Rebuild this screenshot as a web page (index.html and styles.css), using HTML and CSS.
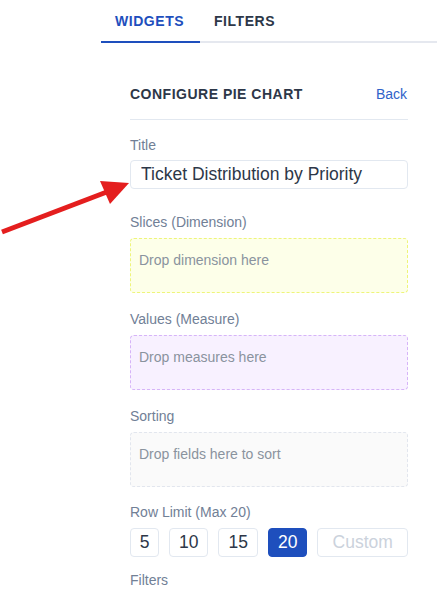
FILE: index.html
```html
<!DOCTYPE html>
<html lang="en">
<head>
<meta charset="utf-8">
<title>Configure Pie Chart</title>
<link rel="stylesheet" href="styles.css">
</head>
<body>
<div class="page">
  <aside class="sidebar">
    <nav class="tabs">
      <div class="tab active">WIDGETS</div>
      <div class="tab">FILTERS</div>
    </nav>
    <div class="panel">
      <div class="panel-header">
        <h2 class="panel-title">CONFIGURE PIE CHART</h2>
        <a class="back-link" href="#">Back</a>
      </div>
      <div class="field field-title">
        <label class="field-label">Title</label>
        <input class="text-input" type="text" value="Ticket Distribution by Priority">
      </div>
      <div class="field">
        <div class="field-label">Slices (Dimension)</div>
        <div class="drop-zone zone-dimension">Drop dimension here</div>
      </div>
      <div class="field">
        <div class="field-label">Values (Measure)</div>
        <div class="drop-zone zone-measure">Drop measures here</div>
      </div>
      <div class="field">
        <div class="field-label">Sorting</div>
        <div class="drop-zone zone-sort">Drop fields here to sort</div>
      </div>
      <div class="field field-limit">
        <div class="field-label">Row Limit (Max 20)</div>
        <div class="limit-row">
          <button class="limit-btn">5</button>
          <button class="limit-btn">10</button>
          <button class="limit-btn">15</button>
          <button class="limit-btn selected">20</button>
          <input class="limit-custom" type="text" placeholder="Custom">
        </div>
      </div>
      <div class="field field-filters">
        <div class="field-label">Filters</div>
      </div>
    </div>
  </aside>
  <svg class="pointer-arrow" width="140" height="60" viewBox="0 0 140 60" aria-hidden="true">
    <line x1="2" y1="53" x2="112" y2="11" stroke="#e41e1e" stroke-width="5" stroke-linecap="butt"/>
    <polygon points="129,4 100,2 110,25" fill="#e41e1e"/>
  </svg>
</div>
</body>
</html>
```

FILE: styles.css
```css
* {
  box-sizing: border-box;
}

html, body {
  margin: 0;
  padding: 0;
  background: #ffffff;
}

body {
  font-family: "Liberation Sans", Arial, sans-serif;
  color: #2d3748;
  overflow: hidden;
}

.page {
  position: relative;
  width: 437px;
  height: 597px;
  padding-left: 101px;
}

.sidebar {
  width: 336px;
}

.tabs {
  display: flex;
  border-bottom: 2px solid #e5e8ef;
}

.tab {
  width: 99px;
  padding: 13px 0 12px 14px;
  font-size: 14px;
  line-height: 16px;
  font-weight: bold;
  letter-spacing: 0.55px;
  color: #2d3748;
  margin-bottom: -2px;
  border-bottom: 2px solid transparent;
}

.tab.active {
  color: #1e4fbd;
  border-bottom-color: #1e4fbd;
}

.panel {
  padding: 0 29px;
}

.panel-header {
  display: flex;
  justify-content: space-between;
  align-items: center;
  padding: 42px 0 16px;
  border-bottom: 1px solid #e2e8f0;
}

.panel-title {
  margin: 0;
  font-size: 14px;
  line-height: 18px;
  font-weight: bold;
  letter-spacing: 0.5px;
  color: #2d3748;
}

.back-link {
  font-size: 14px;
  line-height: 18px;
  color: #2f62c9;
  text-decoration: none;
  margin-right: 1px;
}

.field {
  margin-top: 16px;
}

.field-title {
  margin-top: 15px;
  margin-bottom: 23px;
}

.field-label {
  display: block;
  font-size: 14px;
  line-height: 20px;
  color: #718096;
  margin-bottom: 6px;
}

.field-title .field-label {
  margin-bottom: 5px;
}

.text-input {
  display: block;
  width: 100%;
  height: 29px;
  border: 1px solid #e2e8f0;
  border-radius: 4px;
  padding: 0 10px;
  font-family: "Liberation Sans", Arial, sans-serif;
  font-size: 17.5px;
  color: #2d3748;
  outline: none;
}

.field-title + .field {
  margin-top: 0;
}

.drop-zone {
  height: 55px;
  border: 1px dashed;
  border-radius: 4px;
  padding: 11px 8px;
  font-size: 14px;
  line-height: 20px;
  color: #8a939e;
}

.zone-dimension {
  background: #fdffe9;
  border-color: #eef57a;
}

.zone-measure {
  background: #f8f1ff;
  border-color: #d6b4f8;
}

.zone-sort {
  background: #fafafa;
  border-color: #e2e6ee;
}

.field-limit {
  margin-top: 15px;
}

.field-filters {
  margin-top: 13px;
}

.limit-row {
  display: flex;
  gap: 10px;
}

.limit-btn {
  height: 29px;
  min-width: 29px;
  padding: 0 9px;
  border: 1px solid #e2e8f0;
  border-radius: 4px;
  background: #ffffff;
  font-family: "Liberation Sans", Arial, sans-serif;
  font-size: 17.5px;
  color: #2d3748;
}

.limit-btn:first-child {
  width: 29px;
  padding: 0;
}

.limit-btn.selected {
  background: #1e4fbd;
  border-color: #1e4fbd;
  color: #ffffff;
}

.limit-custom {
  flex: 1;
  height: 29px;
  min-width: 0;
  border: 1px solid #e2e8f0;
  border-radius: 4px;
  text-align: center;
  font-family: "Liberation Sans", Arial, sans-serif;
  font-size: 17.5px;
  color: #2d3748;
  outline: none;
}

.limit-custom::placeholder {
  color: #cbd2dc;
}

.pointer-arrow {
  position: absolute;
  left: 0;
  top: 179px;
}
```
